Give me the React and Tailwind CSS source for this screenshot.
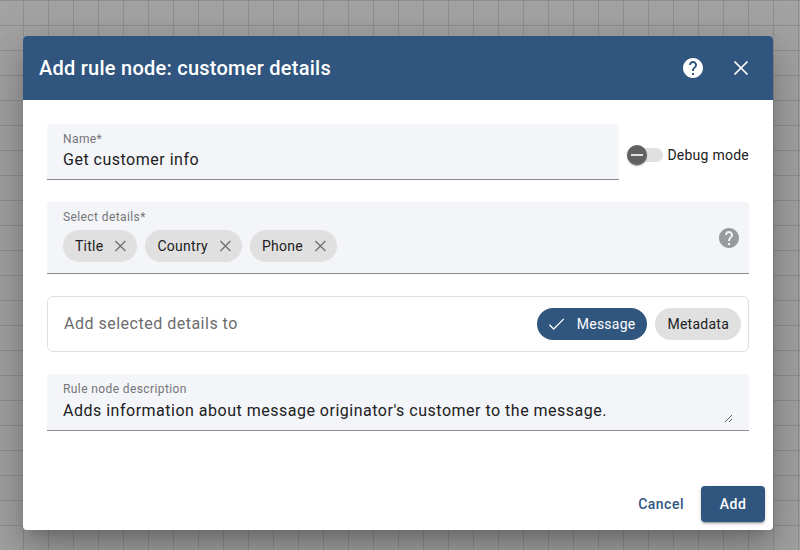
import React from "react";

const HELP = "M12 2C6.48 2 2 6.48 2 12s4.48 10 10 10 10-4.48 10-10S17.52 2 12 2zm1 17h-2v-2h2v2zm2.07-7.75-.9.92C13.45 12.9 13 13.5 13 15h-2v-.5c0-1.1.45-2.1 1.17-2.83l1.24-1.26c.37-.36.59-.86.59-1.41 0-1.1-.9-2-2-2s-2 .9-2 2H8c0-2.21 1.79-4 4-4s4 1.79 4 4c0 .88-.36 1.68-.93 2.25z";

function HelpIcon({ className }) {
  return (
    <svg viewBox="0 0 24 24" fill="currentColor" className={`size-6 shrink-0 ${className}`}>
      <path d={HELP} />
    </svg>
  );
}

function Chip({ label, width }) {
  return (
    <span className={`flex h-8 items-center justify-between rounded-full bg-[#e0e0e0] pr-2 text-sm tracking-[0.25px] text-[#212121] ${width}`}>
      {label}
      <svg viewBox="0 0 18 18" fill="none" stroke="currentColor" strokeWidth="1.3" className="size-[18px] shrink-0 text-[#707070]">
        <path d="M4.4 4 14.4 14M14.4 4 4.4 14" />
      </svg>
    </span>
  );
}

function Label({ children }) {
  return <div className="h-4 text-xs leading-4 tracking-[0.4px] text-[#737477]">{children}</div>;
}

export default function App() {
  return (
    <div className="flex h-[550px] w-[800px] overflow-hidden bg-[#a3a3a3] bg-[linear-gradient(to_right,#8f8f8f_1px,transparent_1px),linear-gradient(to_bottom,#8f8f8f_1px,transparent_1px)] bg-[size:25px_25px] bg-[position:-2px_0px] pl-[23px] pt-9 font-['Roboto',sans-serif] text-[#212121]">
      <div className="flex h-[494px] w-[750px] flex-col overflow-hidden rounded bg-white shadow-[0_11px_15px_-7px_rgba(0,0,0,0.2),0_24px_38px_3px_rgba(0,0,0,0.14),0_9px_46px_8px_rgba(0,0,0,0.12)]">
        <header className="flex h-16 shrink-0 items-center bg-[#305680] px-4 text-white">
          <h2 className="flex-1 text-xl font-medium tracking-[0.25px]">Add rule node: customer details</h2>
          <button className="flex size-12 items-center justify-center"><HelpIcon className="text-white" /></button>
          <button className="-mr-2 flex size-12 items-center justify-center">
            <svg viewBox="0 0 24 24" fill="none" stroke="currentColor" strokeWidth="1.7" className="size-6">
              <path d="M5.5 5.5 18.5 18.5M18.5 5.5 5.5 18.5" />
            </svg>
          </button>
        </header>

        <main className="flex flex-1 flex-col px-6 pt-6">
          <div className="flex">
            <div className="h-14 w-[572px] rounded-t border-b border-[#8b8c8f] bg-[#f3f5f9] px-4 pt-[7px]">
              <Label>Name*</Label>
              <div className="h-[26px] text-base leading-[26px] tracking-[0.5px]">Get customer info</div>
            </div>
            <div className="flex h-[62px] flex-1 items-center pl-2">
              <span className="flex h-[14px] w-9 items-center rounded-full bg-[#e0e0e0]">
                <span className="flex size-5 shrink-0 items-center justify-center rounded-full bg-[#616161] shadow-[0_2px_1px_-1px_rgba(0,0,0,0.2),0_1px_1px_rgba(0,0,0,0.14),0_1px_3px_rgba(0,0,0,0.12)]">
                  <span className="h-0.5 w-3 bg-[#e0e0e0]" />
                </span>
              </span>
              <span className="whitespace-nowrap pl-[4.5px] text-sm tracking-[0.25px]">Debug mode</span>
            </div>
          </div>

          <div className="mt-4 flex h-[72px] items-center rounded-t border-b border-[#8b8c8f] bg-[#f3f5f9] pl-4 pr-2">
            <div className="h-full flex-1 pt-[7px]">
              <Label>Select details*</Label>
              <div className="mt-[5px] flex gap-2">
                <Chip label="Title" width="w-[74px] pl-3" />
                <Chip label="Country" width="w-[97px] pl-[12.5px]" />
                <Chip label="Phone" width="w-[87px] pl-3" />
              </div>
            </div>
            <HelpIcon className="text-[#999a9c]" />
          </div>

          <div className="mt-[22px] flex h-14 items-center gap-2 rounded-md border border-[#e0e0e0] pl-4 pr-[7px]">
            <span className="flex-1 text-base tracking-[0.5px] text-[#6c6c6c]">Add selected details to</span>
            <span className="flex h-8 w-[110px] items-center justify-between rounded-full bg-[#305680] pl-2.5 pr-[11.5px] text-sm tracking-[0.25px] text-white">
              <svg viewBox="0 0 18 18" fill="none" stroke="currentColor" strokeWidth="1.25" className="size-[18px] shrink-0">
                <path d="M2.4 9.8 6.7 14 16.8 3.9" />
              </svg>
              Message
            </span>
            <span className="flex h-8 w-[86px] items-center justify-center rounded-full bg-[#e0e0e0] pl-[0.5px] text-sm tracking-[0.25px]">Metadata</span>
          </div>

          <div className="mt-[22px] h-[57px] rounded-t border-b border-[#8b8c8f] bg-[#f3f5f9] px-4 pt-[7px]">
            <Label>Rule node description</Label>
            <textarea
              className="block h-[26px] w-full resize overflow-hidden bg-transparent pt-px text-base leading-[26px] tracking-[0.5px] outline-none"
              defaultValue="Adds information about message originator's customer to the message."
            />
          </div>
        </main>

        <footer className="flex h-[52px] shrink-0 items-start justify-end p-2 text-sm font-medium tracking-[0.5px]">
          <button className="h-9 px-4 pr-[17px] text-[#305680]">Cancel</button>
          <button className="h-9 w-16 rounded bg-[#305680] text-white shadow-[0_3px_1px_-2px_rgba(0,0,0,0.2),0_2px_2px_rgba(0,0,0,0.14),0_1px_5px_rgba(0,0,0,0.12)]">Add</button>
        </footer>
      </div>
    </div>
  );
}
